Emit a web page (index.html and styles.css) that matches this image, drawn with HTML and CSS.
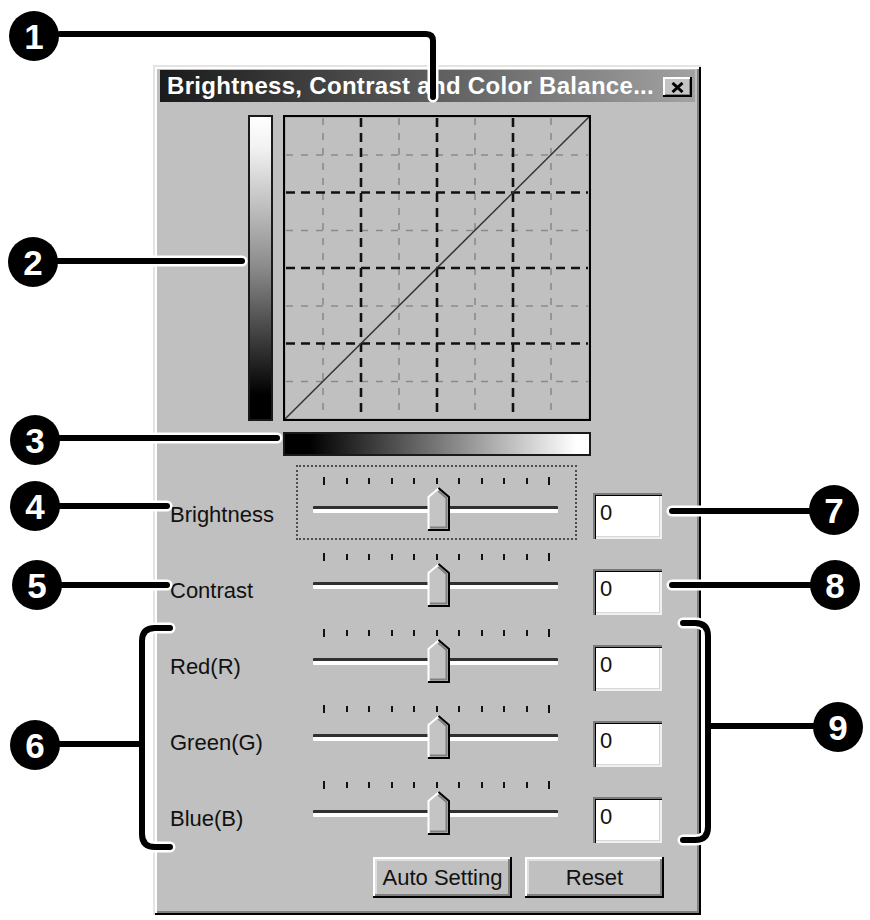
FILE: index.html
```html
<!DOCTYPE html>
<html lang="en">
<head>
<meta charset="utf-8">
<title>Brightness, Contrast and Color Balance</title>
<link rel="stylesheet" href="styles.css">
</head>
<body>
<div class="sheet">
  <div class="dialog">
    <div class="titlebar">
      <span class="title">Brightness, Contrast and Color Balance...</span>
      <button class="close" aria-label="Close"><svg width="13" height="11" viewBox="0 0 13 11"><path d="M1.5 1 L11.5 10 M11.5 1 L1.5 10" stroke="#000" stroke-width="3"/></svg></button>
    </div>

    <div class="curve">
      <div class="ramp-v"></div>
      <svg class="graph" width="308" height="306" viewBox="0 0 308 306">
        <g stroke="#8a8a8a" stroke-width="1.6" stroke-dasharray="7 8" fill="none">
          <path d="M40 3 V303 M116 3 V303 M192 3 V303 M268 3 V303"/>
          <path d="M3 40 H305 M3 115.5 H305 M3 191 H305 M3 266.5 H305"/>
        </g>
        <g stroke="#111" stroke-width="2.6" stroke-dasharray="9 6" fill="none">
          <path d="M78 3 V303 M154 3 V303 M230 3 V303"/>
          <path d="M3 77.5 H305 M3 153 H305 M3 228.5 H305"/>
        </g>
        <line x1="2" y1="304" x2="306" y2="2" stroke="#333" stroke-width="1.5"/>
        <rect x="1" y="1" width="306" height="304" fill="none" stroke="#000" stroke-width="2.2"/>
      </svg>
    </div>
    <div class="ramp-h"></div>

    <div class="rows">
      <div class="row">
        <span class="label">Brightness</span>
        <div class="slider focused">
          <div class="ticks"><i class="long"></i><i></i><i></i><i></i><i></i><i></i><i></i><i></i><i></i><i></i><i class="long"></i></div>
          <div class="track"></div>
          <svg class="thumb" width="23" height="44" viewBox="0 0 23 44"><path d="M1 10 L11.5 1 L22 10 V43 H1 Z" fill="#c4c4c4"/><path d="M1.5 42 V10 L11.5 1.5" stroke="#fff" stroke-width="2" fill="none"/><path d="M11.5 4 L19.5 11 V40.5 H3" stroke="#808080" stroke-width="2" fill="none"/><path d="M11.5 1 L22 10 V43 H1" stroke="#000" stroke-width="2" fill="none"/></svg>
        </div>
        <div class="field">0</div>
      </div>
      <div class="row">
        <span class="label">Contrast</span>
        <div class="slider">
          <div class="ticks"><i class="long"></i><i></i><i></i><i></i><i></i><i></i><i></i><i></i><i></i><i></i><i class="long"></i></div>
          <div class="track"></div>
          <svg class="thumb" width="23" height="44" viewBox="0 0 23 44"><path d="M1 10 L11.5 1 L22 10 V43 H1 Z" fill="#c4c4c4"/><path d="M1.5 42 V10 L11.5 1.5" stroke="#fff" stroke-width="2" fill="none"/><path d="M11.5 4 L19.5 11 V40.5 H3" stroke="#808080" stroke-width="2" fill="none"/><path d="M11.5 1 L22 10 V43 H1" stroke="#000" stroke-width="2" fill="none"/></svg>
        </div>
        <div class="field">0</div>
      </div>
      <div class="row">
        <span class="label">Red(R)</span>
        <div class="slider">
          <div class="ticks"><i class="long"></i><i></i><i></i><i></i><i></i><i></i><i></i><i></i><i></i><i></i><i class="long"></i></div>
          <div class="track"></div>
          <svg class="thumb" width="23" height="44" viewBox="0 0 23 44"><path d="M1 10 L11.5 1 L22 10 V43 H1 Z" fill="#c4c4c4"/><path d="M1.5 42 V10 L11.5 1.5" stroke="#fff" stroke-width="2" fill="none"/><path d="M11.5 4 L19.5 11 V40.5 H3" stroke="#808080" stroke-width="2" fill="none"/><path d="M11.5 1 L22 10 V43 H1" stroke="#000" stroke-width="2" fill="none"/></svg>
        </div>
        <div class="field">0</div>
      </div>
      <div class="row">
        <span class="label">Green(G)</span>
        <div class="slider">
          <div class="ticks"><i class="long"></i><i></i><i></i><i></i><i></i><i></i><i></i><i></i><i></i><i></i><i class="long"></i></div>
          <div class="track"></div>
          <svg class="thumb" width="23" height="44" viewBox="0 0 23 44"><path d="M1 10 L11.5 1 L22 10 V43 H1 Z" fill="#c4c4c4"/><path d="M1.5 42 V10 L11.5 1.5" stroke="#fff" stroke-width="2" fill="none"/><path d="M11.5 4 L19.5 11 V40.5 H3" stroke="#808080" stroke-width="2" fill="none"/><path d="M11.5 1 L22 10 V43 H1" stroke="#000" stroke-width="2" fill="none"/></svg>
        </div>
        <div class="field">0</div>
      </div>
      <div class="row">
        <span class="label">Blue(B)</span>
        <div class="slider">
          <div class="ticks"><i class="long"></i><i></i><i></i><i></i><i></i><i></i><i></i><i></i><i></i><i></i><i class="long"></i></div>
          <div class="track"></div>
          <svg class="thumb" width="23" height="44" viewBox="0 0 23 44"><path d="M1 10 L11.5 1 L22 10 V43 H1 Z" fill="#c4c4c4"/><path d="M1.5 42 V10 L11.5 1.5" stroke="#fff" stroke-width="2" fill="none"/><path d="M11.5 4 L19.5 11 V40.5 H3" stroke="#808080" stroke-width="2" fill="none"/><path d="M11.5 1 L22 10 V43 H1" stroke="#000" stroke-width="2" fill="none"/></svg>
        </div>
        <div class="field">0</div>
      </div>
    </div>

    <div class="buttons">
      <button class="btn">Auto Setting</button>
      <button class="btn">Reset</button>
    </div>
  </div>

  <!-- numbered callouts drawn over the dialog -->
  <svg class="callouts" width="870" height="920" viewBox="0 0 870 920">
    <g fill="none" stroke-linecap="round" stroke-linejoin="round">
      <g stroke="#fff" stroke-width="11">
        <path d="M60 34 H426 Q433 34 433 41 V97"/>
        <path d="M58 261 H242"/>
        <path d="M60 438 H277"/>
        <path d="M60 506 H167"/>
        <path d="M62 585 H167"/>
        <path d="M60 744 H142"/>
        <path d="M170 628 H155 Q142 628 142 641 V834 Q142 847 155 847 H170"/>
        <path d="M672 511 H810"/>
        <path d="M672 585 H810"/>
        <path d="M708 726 H813"/>
        <path d="M683 623 H695 Q708 623 708 636 V827 Q708 840 695 840 H683"/>
      </g>
      <g stroke="#000" stroke-width="6">
        <path d="M60 34 H426 Q433 34 433 41 V97"/>
        <path d="M58 261 H242"/>
        <path d="M60 438 H277"/>
        <path d="M60 506 H167"/>
        <path d="M62 585 H167"/>
        <path d="M60 744 H142"/>
        <path d="M170 628 H155 Q142 628 142 641 V834 Q142 847 155 847 H170"/>
        <path d="M672 511 H810"/>
        <path d="M672 585 H810"/>
        <path d="M708 726 H813"/>
        <path d="M683 623 H695 Q708 623 708 636 V827 Q708 840 695 840 H683"/>
      </g>
    </g>
    <g fill="#000">
      <circle cx="34" cy="36" r="25"/>
      <circle cx="33" cy="262" r="25"/>
      <circle cx="35" cy="440" r="25"/>
      <circle cx="35" cy="506" r="25"/>
      <circle cx="37" cy="585" r="25"/>
      <circle cx="35" cy="745" r="25"/>
      <circle cx="834" cy="510" r="25"/>
      <circle cx="835" cy="585" r="25"/>
      <circle cx="838" cy="727" r="25"/>
    </g>
    <g class="num" fill="#fff" text-anchor="middle">
      <text x="34" y="49">1</text>
      <text x="33" y="275">2</text>
      <text x="35" y="453">3</text>
      <text x="35" y="519">4</text>
      <text x="37" y="598">5</text>
      <text x="35" y="758">6</text>
      <text x="834" y="523">7</text>
      <text x="835" y="598">8</text>
      <text x="838" y="740">9</text>
    </g>
  </svg>
</div>
</body>
</html>
```

FILE: styles.css
```css
* { box-sizing: border-box; }

html, body {
  margin: 0;
  background: #fff;
}

body {
  font-family: "Liberation Sans", Arial, sans-serif;
  color: #111;
}

.sheet {
  position: relative;
  width: 870px;
  height: 920px;
  overflow: hidden;
}

/* dialog window */
.dialog {
  width: 548px;
  height: 850px;
  margin: 65px 0 0 153px;
  padding: 5px 6px 0 7px;
  background: #c0c0c0;
  display: flex;
  flex-direction: column;
  box-shadow:
    inset 2px 2px 0 #e4e4e4,
    inset -2px -2px 0 #000,
    inset 4px 4px 0 #fff,
    inset -4px -4px 0 #808080;
}

.titlebar {
  height: 32px;
  display: flex;
  align-items: center;
  padding: 0 3px 0 7px;
  background: linear-gradient(to right, #1a1a1a 0%, #555 45%, #a2a2a2 100%);
}

.title {
  flex: 1;
  color: #fff;
  font-weight: bold;
  font-size: 24px;
  line-height: 32px;
  white-space: nowrap;
  letter-spacing: 0.3px;
}

.close {
  width: 29px;
  height: 20px;
  margin-top: 2px;
  padding: 0;
  border: 0;
  background: #c4c4c4;
  display: flex;
  align-items: center;
  justify-content: center;
  box-shadow:
    inset -2px -2px 0 #000,
    inset 2px 2px 0 #fff,
    inset -3px -3px 0 #808080;
}

.close svg { display: block; }

/* tone curve */
.curve {
  margin-top: 13px;
  padding-left: 88px;
  display: flex;
  gap: 10px;
}

.ramp-v {
  width: 25px;
  height: 306px;
  border: 2px solid #1a1a1a;
  background: linear-gradient(to bottom, #fff 0%, #f2f2f2 10%, #8a8a8a 50%, #000 92%);
}

.graph { display: block; }

.ramp-h {
  width: 308px;
  height: 24px;
  margin: 11px 0 0 123px;
  border: 2px solid #1a1a1a;
  background: linear-gradient(to right, #000 8%, #777 50%, #fff 96%);
}

/* slider rows */
.rows { margin-top: 9px; }

.row {
  display: grid;
  grid-template-columns: 120px 281px 69px;
  column-gap: 16px;
  align-items: start;
  height: 76px;
}

.label {
  padding-left: 10px;
  margin-top: 37px;
  font-size: 22px;
  line-height: 26px;
  color: #111;
  white-space: nowrap;
}

.slider {
  position: relative;
  height: 75px;
  border: 2px dotted transparent;
}

.slider.focused { border-color: #4d4d4d; }

.ticks {
  width: 227px;
  height: 8px;
  margin: 10px 0 0 25px;
  display: flex;
  justify-content: space-between;
  align-items: flex-start;
}

.ticks i {
  width: 2px;
  height: 6px;
  margin-top: 1px;
  background: #111;
}

.ticks i.long {
  height: 8px;
  margin-top: 0;
}

.track {
  width: 245px;
  height: 7px;
  margin: 21px 0 0 15px;
  border-top: 3px solid #303030;
  background: #fff;
  border-radius: 1px;
}

.thumb {
  position: absolute;
  left: 129px;
  top: 20px;
  display: block;
}

.field {
  margin-top: 28px;
  height: 46px;
  padding: 7px 0 0 7px;
  background: #fff;
  font-size: 22px;
  line-height: 26px;
  color: #111;
  box-shadow:
    inset 2px 2px 0 #7a7a7a,
    inset 3px 3px 0 #000,
    inset -2px -2px 0 #f0f0f0,
    inset -3px -3px 0 #d6d6d6;
}

/* push buttons */
.buttons {
  display: flex;
  gap: 13px;
  margin: 12px 0 0 213px;
}

.btn {
  width: 139px;
  height: 41px;
  padding: 0;
  border: 0;
  background: #c0c0c0;
  font-family: "Liberation Sans", Arial, sans-serif;
  font-size: 22px;
  color: #111;
  box-shadow:
    inset -2px -2px 0 #000,
    inset 2px 2px 0 #fff,
    inset -4px -4px 0 #808080,
    inset 4px 4px 0 #dfdfdf;
}

/* callout overlay */
.callouts {
  position: absolute;
  left: 0;
  top: 0;
  pointer-events: none;
}

.num text {
  font-family: "Liberation Sans", Arial, sans-serif;
  font-weight: bold;
  font-size: 35px;
}
```
